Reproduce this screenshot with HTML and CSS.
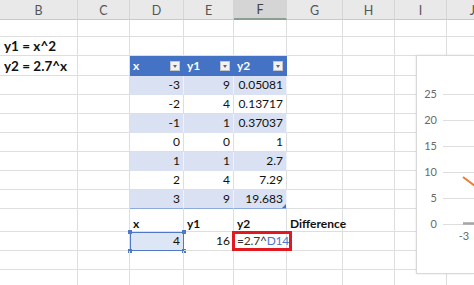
FILE: index.html
```html
<!DOCTYPE html>
<html>
<head>
<meta charset="utf-8">
<link rel="stylesheet" href="styles.css">
</head>
<body>
<div class="sheet">
  <div class="hd">B</div><div class="hd">C</div><div class="hd">D</div><div class="hd">E</div><div class="hd hd-sel">F</div><div class="hd">G</div><div class="hd">H</div><div class="hd">I</div><div class="hd">J</div>

  <div class="c"></div><div class="c"></div><div class="c"></div><div class="c"></div><div class="c"></div><div class="c"></div><div class="c"></div><div class="c"></div><div class="c"></div>

  <div class="c big">y1 = x^2</div><div class="c"></div><div class="c"></div><div class="c"></div><div class="c"></div><div class="c"></div><div class="c"></div><div class="c"></div><div class="c"></div>

  <div class="c big">y2 = 2.7^x</div><div class="c"></div>
  <div class="c th"><span>x</span><i class="flt"></i></div>
  <div class="c th"><span>y1</span><i class="flt"></i></div>
  <div class="c th"><span>y2</span><i class="flt"></i></div>
  <div class="c"></div><div class="c"></div><div class="c"></div><div class="c"></div>

  <div class="c"></div><div class="c"></div><div class="c r band">-3</div><div class="c r band">9</div><div class="c r band">0.05081</div><div class="c"></div><div class="c"></div><div class="c"></div><div class="c"></div>
  <div class="c"></div><div class="c"></div><div class="c r">-2</div><div class="c r">4</div><div class="c r">0.13717</div><div class="c"></div><div class="c"></div><div class="c"></div><div class="c"></div>
  <div class="c"></div><div class="c"></div><div class="c r band">-1</div><div class="c r band">1</div><div class="c r band">0.37037</div><div class="c"></div><div class="c"></div><div class="c"></div><div class="c"></div>
  <div class="c"></div><div class="c"></div><div class="c r">0</div><div class="c r">0</div><div class="c r">1</div><div class="c"></div><div class="c"></div><div class="c"></div><div class="c"></div>
  <div class="c"></div><div class="c"></div><div class="c r band">1</div><div class="c r band">1</div><div class="c r band">2.7</div><div class="c"></div><div class="c"></div><div class="c"></div><div class="c"></div>
  <div class="c"></div><div class="c"></div><div class="c r">2</div><div class="c r">4</div><div class="c r">7.29</div><div class="c"></div><div class="c"></div><div class="c"></div><div class="c"></div>
  <div class="c"></div><div class="c"></div><div class="c r band last">3</div><div class="c r band last">9</div><div class="c r band last corner">19.683</div><div class="c"></div><div class="c"></div><div class="c"></div><div class="c"></div>

  <div class="c"></div><div class="c"></div><div class="c b">x</div><div class="c b">y1</div><div class="c b">y2</div><div class="c b spill">Difference</div><div class="c"></div><div class="c"></div><div class="c"></div>

  <div class="c"></div><div class="c"></div>
  <div class="c r selref">4<i class="h h1"></i><i class="h h2"></i><i class="h h3"></i><i class="h h4"></i></div>
  <div class="c r">16</div>
  <div class="c edit"><span class="txt">=2.7^<span class="ref">D14</span></span></div>
  <div class="c"></div><div class="c"></div><div class="c"></div><div class="c"></div>

  <div class="c"></div><div class="c"></div><div class="c"></div><div class="c"></div><div class="c"></div><div class="c"></div><div class="c"></div><div class="c"></div><div class="c"></div>
  <div class="c"></div><div class="c"></div><div class="c"></div><div class="c"></div><div class="c"></div><div class="c"></div><div class="c"></div><div class="c"></div><div class="c"></div>
</div>

<div class="chart">
  <svg width="58" height="217" viewBox="0 0 58 217">
    <g class="grid">
      <line x1="26" y1="38.5" x2="58" y2="38.5"/>
      <line x1="26" y1="64.5" x2="58" y2="64.5"/>
      <line x1="26" y1="90.5" x2="58" y2="90.5"/>
      <line x1="26" y1="116.5" x2="58" y2="116.5"/>
      <line x1="26" y1="142.5" x2="58" y2="142.5"/>
      <line x1="26" y1="168.5" x2="58" y2="168.5"/>
    </g>
    <g class="lbl">
      <text x="20" y="42">25</text>
      <text x="20" y="68">20</text>
      <text x="20" y="94">15</text>
      <text x="20" y="120">10</text>
      <text x="20" y="146">5</text>
      <text x="20" y="172">0</text>
    </g>
    <text class="xl" x="47" y="184">-3</text>
    <line class="s2" x1="46" y1="167.5" x2="58" y2="167.5"/>
    <polyline class="s1" points="46,121 81,147"/>
  </svg>
</div>
</body>
</html>
```
FILE: styles.css
```css
html, body {
  margin: 0;
  padding: 0;
  background: #fff;
  overflow: hidden;
}
body {
  width: 474px;
  height: 285px;
  position: relative;
  font-family: Lato, "Liberation Sans", sans-serif;
}
.sheet {
  display: grid;
  grid-template-columns: 78px 52px 54px 50px 53px 56px 52px 52px 52px;
  grid-template-rows: 20px 17px 19px 20px repeat(7, 19px) 23px 19px 19px 19px;
  width: 474px;
  height: 285px;
  overflow: hidden;
}
.hd {
  background: #e9e9e9;
  border-right: 1px solid #d6d6d6;
  border-bottom: 1px solid #c9c9c9;
  color: #555;
  font-size: 12.5px;
  display: flex;
  align-items: center;
  justify-content: center;
  box-sizing: border-box;
  padding-top: 1px;
}
.hd-sel {
  background: #d5d5d5;
  border-bottom: 2px solid #8a9f90;
  color: #444;
}
.c {
  box-sizing: border-box;
  border-right: 1px solid #dedede;
  border-bottom: 1px solid #dedede;
  font-size: 12px;
  color: #111;
  display: flex;
  align-items: flex-end;
  padding: 0 3px 2px 3px;
  white-space: nowrap;
  position: relative;
  line-height: 14px;
}
.r { justify-content: flex-end; }
.big {
  font-weight: 700;
  font-size: 13.5px;
  padding-left: 4px;
  padding-bottom: 2px;
}
.b {
  font-weight: 700;
  padding-bottom: 0;
}
.spill { overflow: visible; }
.th {
  background: #4472c4;
  border-right-color: #4472c4;
  border-bottom-color: #4472c4;
  color: #fff;
  font-weight: 700;
  justify-content: space-between;
  align-items: center;
  padding: 1px 3px 0 3px;
}
.flt {
  width: 10px;
  height: 10px;
  background: #f2f2f2;
  border: 1px solid #c4c4c4;
  box-sizing: border-box;
  display: flex;
  align-items: center;
  justify-content: center;
}
.flt::after {
  content: "";
  border-left: 2.5px solid transparent;
  border-right: 2.5px solid transparent;
  border-top: 3px solid #666;
}
.band {
  background: #d9e1f2;
  border-right-color: #eef2f9;
  border-bottom-color: #d9e1f2;
}
.last { border-bottom-color: #8ea9db; }
.corner::after {
  content: "";
  position: absolute;
  right: 0;
  bottom: 0;
  border-left: 4px solid transparent;
  border-bottom: 4px solid #4472c4;
}
.selref {
  background: #dde6f4;
  border: 1px solid #4f79c6;
}
.h {
  position: absolute;
  width: 4px;
  height: 4px;
  background: #4f79c6;
}
.h1 { left: -3px; top: -3px; }
.h2 { right: -3px; top: -3px; }
.h3 { left: -3px; bottom: -3px; }
.h4 { right: -3px; bottom: -3px; }
.edit {
  color: #333;
  font-size: 12px;
  letter-spacing: -0.2px;
  padding-left: 3px;
  overflow: visible;
  z-index: 1;
}
.edit .txt { position: relative; z-index: 2; }
.edit::before {
  content: "";
  position: absolute;
  left: -2px;
  right: -6px;
  top: -1px;
  bottom: -1px;
  border: 3px solid #e11a22;
}
.ref { color: #4f79c6; }
.chart {
  position: absolute;
  left: 416px;
  right: 0;
  top: 55px;
  height: 217px;
  background: #fff;
  border: 1px solid #d9d9d9;
  border-right: none;
  box-shadow: 0 0 2px rgba(0,0,0,0.12);
  overflow: hidden;
}
.chart svg { display: block; }
.grid line { stroke: #dedede; stroke-width: 1; }
.lbl text, .xl {
  font-family: Lato, "Liberation Sans", sans-serif;
  font-size: 11px;
  fill: #6a6a6a;
  text-anchor: end;
}
.xl { text-anchor: middle; }
.s2 { stroke: #a5a5a5; stroke-width: 2.5; }
.s1 { stroke: #ed7d31; stroke-width: 2; fill: none; }
```
